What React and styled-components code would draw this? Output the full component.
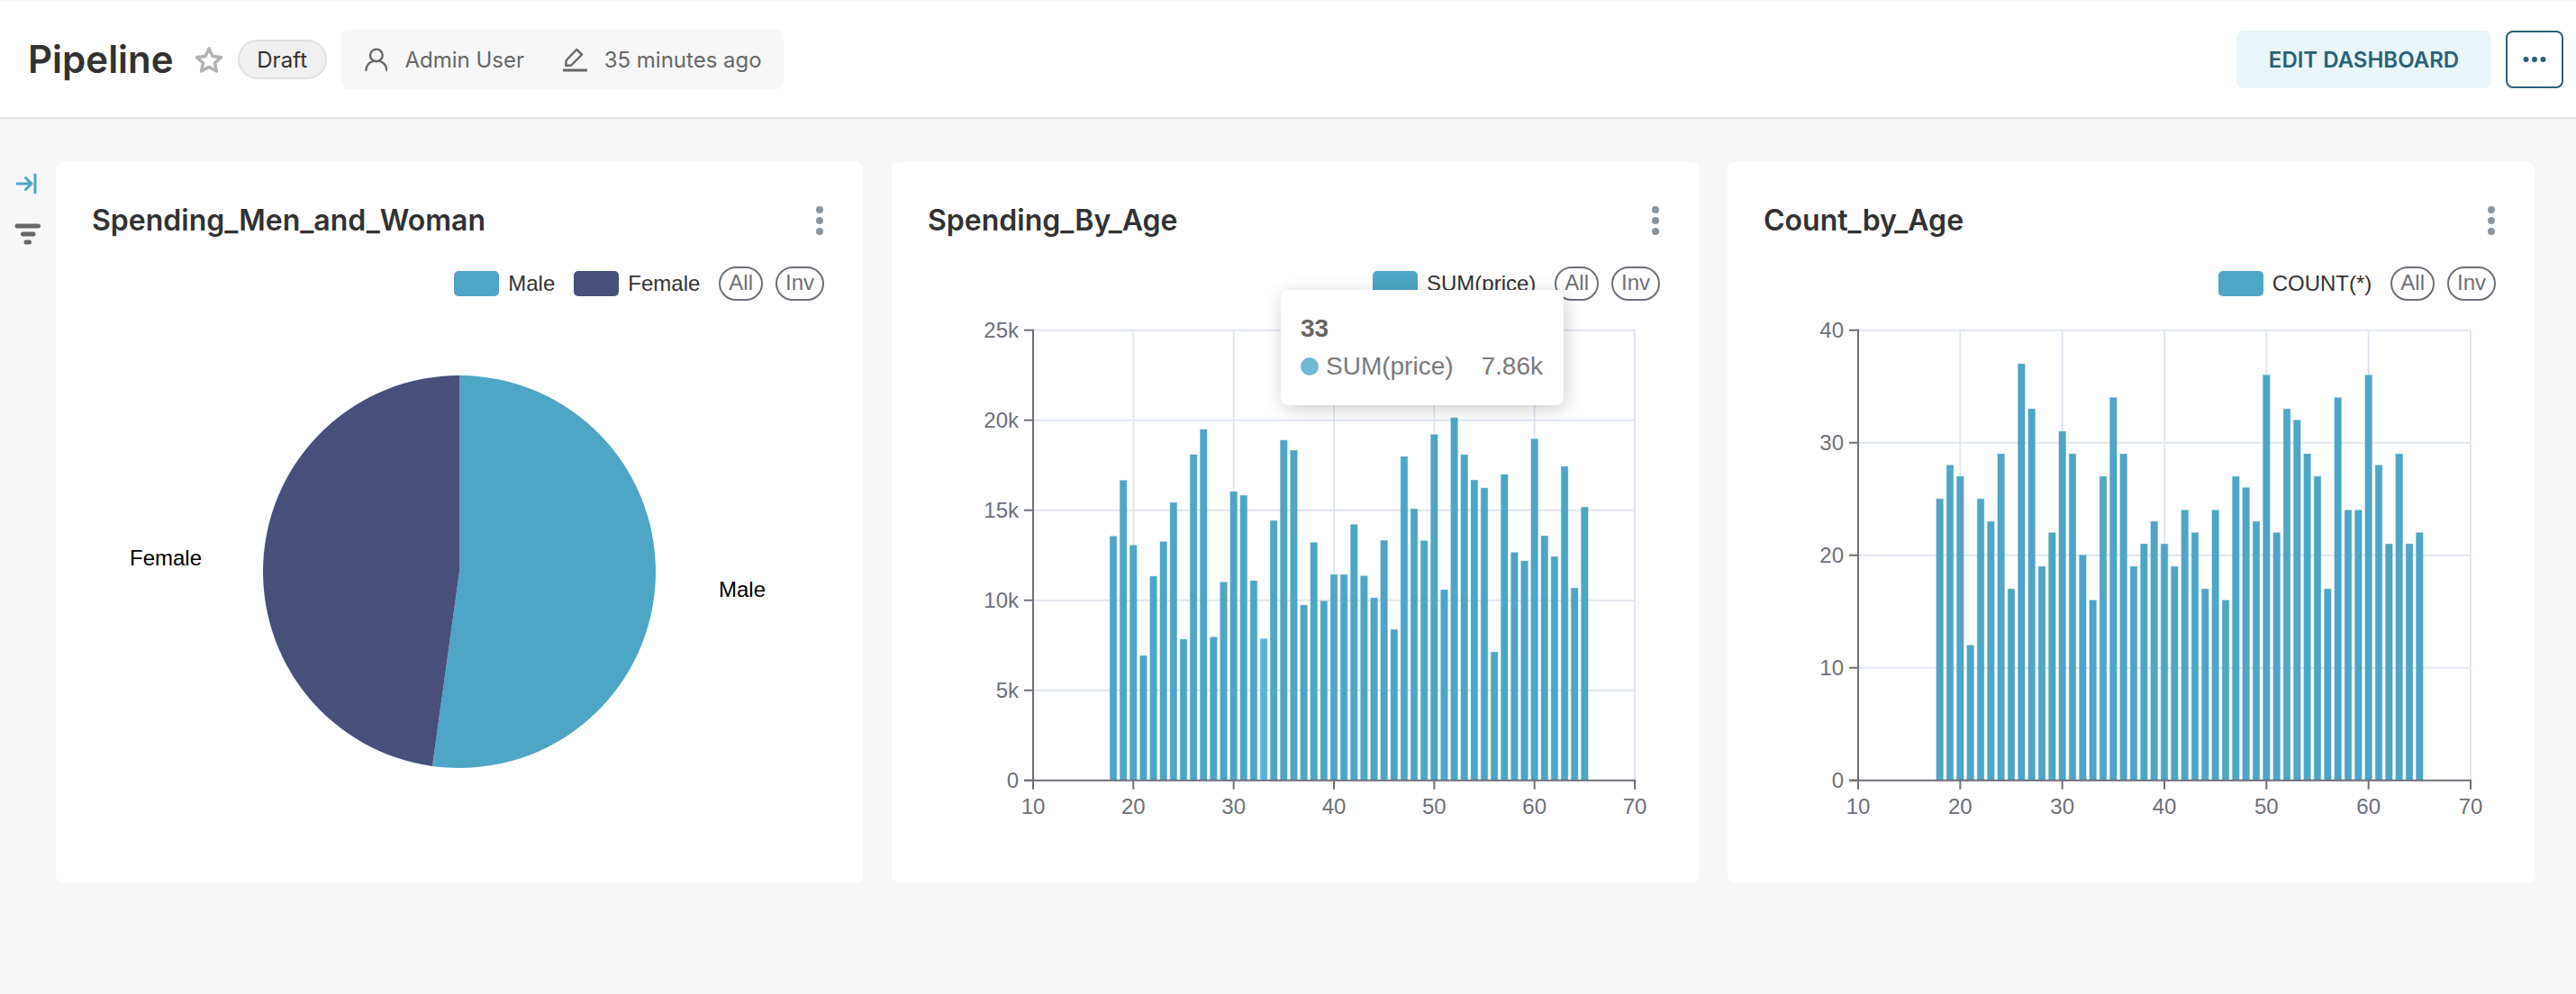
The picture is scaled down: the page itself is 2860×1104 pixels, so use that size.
import React from 'react';
import styled, { createGlobalStyle } from 'styled-components';

const GlobalStyle = createGlobalStyle`
  html, body { margin: 0; padding: 0; }
  body { background: #f7f7f7; font-family: Inter, "Liberation Sans", sans-serif; }
  * { box-sizing: border-box; }
`;

const Page = styled.div`
  min-height: 1104px;
  padding-top: 2px;
  background: #f7f7f7;
`;
const Header = styled.header`
  height: 130px;
  background: #fff;
  border-bottom: 2px solid #e0e0e0;
  display: flex;
  align-items: center;
  justify-content: space-between;
  padding: 0 14px 0 31px;
`;
const HeaderLeft = styled.div`
  display: flex;
  align-items: center;
`;
const Title = styled.h1`
  margin: 0 23px 0 0;
  font-size: 42px;
  line-height: 52px;
  font-weight: 600;
  color: #323232;
`;
const Badge = styled.span`
  height: 44px;
  width: 99px;
  margin: 0 16px 0 16px;
  border-radius: 22px;
  border: 2px solid #e0e0e0;
  background: #f0f0f0;
  color: #323232;
  font-size: 24px;
  display: flex;
  align-items: center;
  justify-content: center;
`;
const Meta = styled.div`
  height: 66px;
  width: 491px;
  padding: 0 24px 0 26px;
  border-radius: 8px;
  background: #f7f7f7;
  display: flex;
  align-items: center;
  white-space: nowrap;
`;
const MetaText = styled.span`
  font-size: 24px;
  color: #666;
  margin-left: ${p => p.$gap}px;
  margin-right: ${p => p.$after || 0}px;
`;
const HeaderRight = styled.div`
  display: flex;
  align-items: center;
  gap: 16px;
`;
const EditButton = styled.button`
  width: 283px;
  height: 64px;
  border: 0;
  border-radius: 8px;
  background: #e9f5f8;
  color: #2a6176;
  font: 600 24px Inter, sans-serif;
`;
const MoreButton = styled.button`
  width: 64px;
  height: 64px;
  padding: 0;
  border: 2px solid #2a6176;
  border-radius: 8px;
  background: #fff;
  display: flex;
  align-items: center;
  justify-content: center;
`;
const Body = styled.main`
  display: flex;
  padding: 48px 46px 0 0;
`;
const Sidebar = styled.aside`
  width: 62px;
  flex: none;
  padding: 12px 0 0 16px;
  display: flex;
  flex-direction: column;
  gap: 32px;
  svg { display: block; }
`;
const Grid = styled.div`
  flex: 1;
  display: grid;
  grid-template-columns: repeat(3, 896px);
  gap: 32px;
`;
const Card = styled.section`
  position: relative;
  height: 800px;
  background: #fff;
  border-radius: 8px;
  overflow: hidden;
`;
const CardHeader = styled.div`
  display: flex;
  align-items: center;
  justify-content: space-between;
  padding: 45px 40px 31px;
  height: 116px;
`;
const CardTitle = styled.h2`
  margin: 0;
  font-size: 32px;
  line-height: 40px;
  font-weight: 600;
  color: #323232;
`;
const Legend = styled.div`
  height: 38px;
  margin-bottom: 6px;
  padding-right: 43px;
  display: flex;
  justify-content: flex-end;
  align-items: center;
  font: 24px "Liberation Sans", Arial, sans-serif;
  color: #333;
`;
const Swatch = styled.span`
  width: 50px;
  height: 28px;
  border-radius: 5px;
  background: ${p => p.$color};
  margin-right: 10px;
`;
const LegendLabel = styled.span`
  margin-right: 21px;
`;
const Pill = styled.span`
  height: 38px;
  padding: 0 9px 3px;
  margin-left: ${p => p.$gap || 0}px;
  border: 2px solid #6e7079;
  border-radius: 19px;
  color: #6e7079;
  display: flex;
  align-items: center;
`;
const ChartSvg = styled.svg`
  display: block;
  width: 896px;
  height: 640px;
  font-family: "Liberation Sans", Arial, sans-serif;
  font-size: 24px;
`;
const Tooltip = styled.div`
  position: absolute;
  left: 432px;
  top: 142px;
  width: 314px;
  height: 128px;
  padding: 27px 23px 0 22px;
  background: #fff;
  border-radius: 8px;
  box-shadow: rgba(0, 0, 0, 0.2) 2px 4px 20px;
  font-family: "Liberation Sans", Arial, sans-serif;
  font-size: 28px;
  color: #7a7a7a;
`;
const TooltipTitle = styled.div`
  font-weight: 700;
  line-height: 32px;
  color: #666;
  margin-bottom: 10px;
`;
const TooltipRow = styled.div`
  display: flex;
  align-items: center;
  line-height: 32px;
`;
const TooltipDot = styled.span`
  width: 20px;
  height: 20px;
  border-radius: 50%;
  background: #70b8d3;
  margin-right: 8px;
`;
const TooltipValue = styled.span`
  margin-left: auto;
`;

const BLUE = '#4da6c6';
const NAVY = '#46507a';
const GRID = '#e0e6f1';
const AXIS = '#6e7079';

const spending = [13550,16650,13050,6920,11330,13250,15420,7830,18085,19485,7950,11000,16030,15820,11080,7860,14420,18885,18320,9730,13200,9950,11420,11420,14200,11350,10130,13320,8370,17980,15070,13300,19200,10580,20130,18080,16670,16230,7120,16980,12650,12180,18950,13570,12420,17430,10670,15170];
const counts = [25,28,27,12,25,23,29,17,37,33,19,22,31,29,20,16,27,34,29,19,21,23,21,19,24,22,17,24,16,27,26,23,36,22,33,32,29,27,17,34,24,24,36,28,21,29,21,22];

const TOP = 26.7;
const BOTTOM = 526.7;

function BarChart({ left, right, values, max, ticks, format, active }) {
  const xAt = age => left + ((age - 10) * (right - left)) / 60;
  const yAt = v => BOTTOM - (v / max) * (BOTTOM - TOP);
  const ages = [10, 20, 30, 40, 50, 60, 70];
  return (
    <ChartSvg viewBox="0 0 896 640">
      {ticks.filter(t => t > 0).map(t => (
        <line key={t} x1={left} x2={right} y1={yAt(t)} y2={yAt(t)} stroke={GRID} strokeWidth="2" />
      ))}
      {ages.slice(1).map(a => (
        <line key={a} x1={xAt(a)} x2={xAt(a)} y1={TOP} y2={BOTTOM} stroke={GRID} strokeWidth="2" />
      ))}
      {values.map((v, i) => {
        const fill = 18 + i === active ? '#56b5da' : BLUE;
        return (
          <rect key={i} x={xAt(18 + i) - 3.75} y={yAt(v)} width="7.5" height={BOTTOM - yAt(v)} fill={fill} stroke={fill} strokeOpacity="0.4" strokeWidth="1" />
        );
      })}
      <line x1={left} x2={left} y1={TOP - 1} y2={BOTTOM} stroke={AXIS} strokeWidth="2" />
      <line x1={left - 10} x2={right + 1} y1={BOTTOM} y2={BOTTOM} stroke={AXIS} strokeWidth="2" />
      {ticks.map(t => (
        <g key={t}>
          <line x1={left - 10} x2={left} y1={yAt(t)} y2={yAt(t)} stroke={AXIS} strokeWidth="2" />
          <text x={left - 16} y={yAt(t)} textAnchor="end" dominantBaseline="central" fill={AXIS}>{format(t)}</text>
        </g>
      ))}
      {ages.map(a => (
        <g key={a}>
          <line x1={xAt(a)} x2={xAt(a)} y1={BOTTOM} y2={BOTTOM + 10} stroke={AXIS} strokeWidth="2" />
          <text x={xAt(a)} y={BOTTOM + 29} textAnchor="middle" dominantBaseline="central" fill={AXIS}>{a}</text>
        </g>
      ))}
    </ChartSvg>
  );
}

function PieChart() {
  const cx = 448, cy = 295, r = 218;
  const a = (187.9 * Math.PI) / 180;
  const ex = cx + r * Math.sin(a);
  const ey = cy - r * Math.cos(a);
  return (
    <ChartSvg viewBox="0 0 896 640">
      <path d={`M${cx} ${cy} L${cx} ${cy - r} A${r} ${r} 0 1 1 ${ex} ${ey} Z`} fill={BLUE} />
      <path d={`M${cx} ${cy} L${ex} ${ey} A${r} ${r} 0 0 1 ${cx} ${cy - r} Z`} fill={NAVY} />
      <text x="82" y="279" dominantBaseline="central" fill="#000">Female</text>
      <text x="736" y="314" dominantBaseline="central" fill="#000">Male</text>
    </ChartSvg>
  );
}

const Kebab = () => (
  <svg width="16" height="40" viewBox="0 0 16 40">
    <circle cx="8" cy="8" r="4" fill="#8c959d" />
    <circle cx="8" cy="20" r="4" fill="#8c959d" />
    <circle cx="8" cy="32" r="4" fill="#8c959d" />
  </svg>
);

const LegendRow = ({ items }) => (
  <Legend>
    {items.map(it => (
      <React.Fragment key={it.label}>
        <Swatch $color={it.color} />
        <LegendLabel>{it.label}</LegendLabel>
      </React.Fragment>
    ))}
    <Pill>All</Pill>
    <Pill $gap={14}>Inv</Pill>
  </Legend>
);

const StarIcon = () => (
  <svg width="32" height="30" viewBox="0 0 32 30">
    <path d="M16 3 L20 11.5 L29.5 12.6 L22.5 19 L24.4 28 L16 23.4 L7.6 28 L9.5 19 L2.5 12.6 L12 11.5 Z" fill="none" stroke="#b3b3b3" strokeWidth="3.6" strokeLinejoin="round" />
  </svg>
);
const UserIcon = () => (
  <svg width="28" height="28" viewBox="0 0 28 28" fill="none" stroke="#666" strokeWidth="2.6" strokeLinecap="round">
    <circle cx="14" cy="9" r="7.4" />
    <path d="M1.5 27 C2 21 6 16.6 10.5 16 M26.5 27 C26 21 22 16.6 17.5 16" />
  </svg>
);
const PencilIcon = () => (
  <svg width="29" height="29" viewBox="0 0 29 29" fill="none" stroke="#666" strokeWidth="2.6" strokeLinejoin="round" strokeLinecap="round">
    <path d="M3.5 21.5 L4 15 L16.5 2 L23 8 L10 21 Z" />
    <path d="M0.5 27 H28.5" strokeWidth="3" />
  </svg>
);
const CollapseIcon = () => (
  <svg width="30" height="24" viewBox="0 0 30 24" fill="none" stroke={BLUE} strokeWidth="3" strokeLinecap="round" strokeLinejoin="round">
    <path d="M3 12 H19 M12.5 5.5 L19 12 L12.5 18.5 M23 2 V22" />
  </svg>
);
const FilterIcon = () => (
  <svg width="30" height="24" viewBox="0 0 30 24" fill="none" stroke="#666" strokeWidth="5" strokeLinecap="round">
    <path d="M3 3 H26.5 M9.5 12 H21 M13 21 H16.5" />
  </svg>
);

export default function App() {
  return (
    <Page>
      <GlobalStyle />
      <Header>
        <HeaderLeft>
          <Title>Pipeline</Title>
          <StarIcon />
          <Badge>Draft</Badge>
          <Meta>
            <UserIcon />
            <MetaText $gap={19} $after={43}>Admin User</MetaText>
            <PencilIcon />
            <MetaText $gap={19}>35 minutes ago</MetaText>
          </Meta>
        </HeaderLeft>
        <HeaderRight>
          <EditButton>EDIT DASHBOARD</EditButton>
          <MoreButton>
            <svg width="26" height="8" viewBox="0 0 26 8">
              <circle cx="3.5" cy="4" r="3" fill="#2a6176" />
              <circle cx="13" cy="4" r="3" fill="#2a6176" />
              <circle cx="22.5" cy="4" r="3" fill="#2a6176" />
            </svg>
          </MoreButton>
        </HeaderRight>
      </Header>
      <Body>
        <Sidebar>
          <CollapseIcon />
          <FilterIcon />
        </Sidebar>
        <Grid>
          <Card>
            <CardHeader>
              <CardTitle>Spending_Men_and_Woman</CardTitle>
              <Kebab />
            </CardHeader>
            <LegendRow items={[{ label: 'Male', color: BLUE }, { label: 'Female', color: NAVY }]} />
            <PieChart />
          </Card>
          <Card>
            <CardHeader>
              <CardTitle>Spending_By_Age</CardTitle>
              <Kebab />
            </CardHeader>
            <LegendRow items={[{ label: 'SUM(price)', color: BLUE }]} />
            <BarChart left={157} right={825} values={spending} max={25000} ticks={[0, 5000, 10000, 15000, 20000, 25000]} format={t => (t ? `${t / 1000}k` : '0')} active={33} />
            <Tooltip>
              <TooltipTitle>33</TooltipTitle>
              <TooltipRow>
                <TooltipDot />
                <span>SUM(price)</span>
                <TooltipValue>7.86k</TooltipValue>
              </TooltipRow>
            </Tooltip>
          </Card>
          <Card>
            <CardHeader>
              <CardTitle>Count_by_Age</CardTitle>
              <Kebab />
            </CardHeader>
            <LegendRow items={[{ label: 'COUNT(*)', color: BLUE }]} />
            <BarChart left={145} right={825} values={counts} max={40} ticks={[0, 10, 20, 30, 40]} format={t => String(t)} />
          </Card>
        </Grid>
      </Body>
    </Page>
  );
}
